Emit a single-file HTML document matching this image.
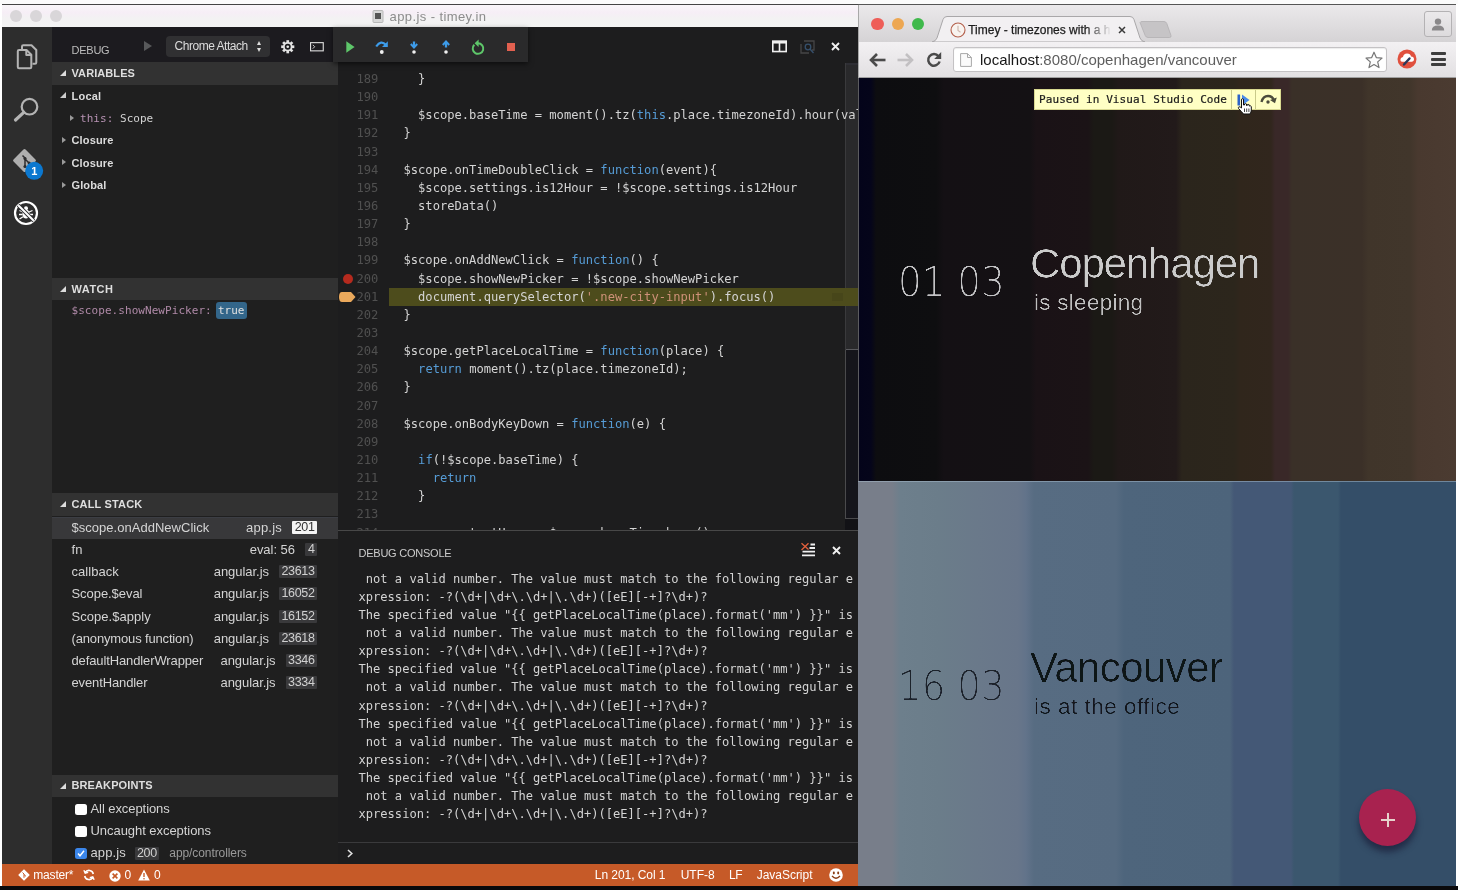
<!DOCTYPE html>
<html lang="en">
<head>
<meta charset="utf-8">
<title>app.js - timey.in</title>
<style>
*{box-sizing:border-box;margin:0;padding:0}
html,body{width:1458px;height:890px;overflow:hidden;background:#fff}
body{position:relative;font-family:"Liberation Sans",sans-serif;font-size:13px;color:#ddd}
.abs{position:absolute}
#vsc,#chr{will-change:transform}
svg{position:absolute;overflow:visible}
#bottomstrip{left:0;top:886px;width:1458px;height:4px;background:#0a0a0c}
#topstrip{left:0;top:0;width:1458px;height:4px;background:#fbfbfb}
/* ---------- VS Code ---------- */
#vsc{left:2px;top:4px;width:856px;height:882px;background:#1d1d1e;overflow:hidden}
#vtitle{left:0;top:0;width:856px;height:23px;background:linear-gradient(#f9f6f9,#f6eef6 35%,#f3f2f3 60%,#f4f4f4);color:#8c8c8c;font-size:13px;line-height:22px;border-top:1px solid #444}
.tl{top:5px;width:12px;height:12px;border-radius:50%;background:#d9d6d9}
#abar{left:0;top:23px;width:50px;height:837px;z-index:2;background:#2d2d2d}
#side{left:49px;top:23px;width:287px;height:837px;background:#1f1f1f;overflow:hidden}
#sidehead{left:0;top:0;width:287px;height:35px;background:#1c1b1f}
.sec{left:0;width:287px;height:23px;background:#323232;color:#dedede;font-weight:bold;font-size:11px;line-height:23px;padding-left:20.5px;letter-spacing:0}
.sec:before{content:"";position:absolute;left:8.5px;top:8px;border:3px solid transparent;border-right-color:#ddd;border-bottom-color:#ddd}
.row{left:0;width:287px;height:22px;line-height:22px;font-size:13px;color:#d4d4d4;white-space:nowrap}
.row .t{position:absolute;left:20.5px;top:0}
.row .f{position:absolute;right:30px;top:0}
.row .bd{position:absolute;right:21px;top:4px}
.b{font-weight:bold;font-size:11px;color:#dcdcdc}
.mono{font-family:"DejaVu Sans Mono","Liberation Mono",monospace}
.badge{display:inline-block;background:#39393b;color:#d0d0d0;font-size:12.5px;line-height:13px;height:13px;padding:0 2.5px;border-radius:1px;letter-spacing:-0.35px}
.tri{position:absolute;width:0;height:0;border-top:3.5px solid transparent;border-bottom:3.5px solid transparent;border-left:4.5px solid #9a9a9a}
#editor{left:336px;top:23px;width:520px;height:503px;background:#1d1d1e;overflow:hidden}
.ln{left:0;width:520px;height:18px;line-height:18px;font-family:"DejaVu Sans Mono","Liberation Mono",monospace;font-size:12.12px;color:#d4d4d4;white-space:pre;overflow:hidden}
.ln i{font-style:normal;position:absolute;left:18.5px;color:#505050}
.ln span.c{position:absolute;left:65.5px}
.ln b{font-weight:normal}.k{color:#569cd6}.s{color:#ce9178}
#console{left:336px;top:526px;width:520px;height:334px;background:#1d1d1e;border-top:1px solid #484848;overflow:hidden}
.cl{left:20.5px;height:18px;line-height:18px;font-family:"DejaVu Sans Mono","Liberation Mono",monospace;font-size:12.08px;color:#d4d4d4;white-space:pre}
#status{left:0;top:860px;width:856px;height:22px;background:#c65a28;color:#fff;font-size:12px;line-height:22px;white-space:nowrap}
#status span{position:absolute;top:0}
/* ---------- Chrome ---------- */
#chr{left:858px;top:4px;width:598px;height:882px;background:#dcdcdc;overflow:hidden}
#tabs{left:0;top:0;width:598px;height:38px;background:linear-gradient(#ebe9eb,#d5d3d5);border-top:1px solid #555}
#tool{left:0;top:38px;width:598px;height:36px;background:linear-gradient(#f3f1f3,#e2e0e2);border-bottom:1px solid #a0a0a0}
#page1{left:0;top:74px;width:598px;height:403px;background:linear-gradient(90deg,#04041a 0,#05051a 13px,#0d0d10 18px,#0e0e10 78px,#141014 86px,#141114 172px,#1a1216 178px,#1b1316 230px,#1b1915 236px,#1b1915 254px,#201918 260px,#221a1a 318px,#2b251c 324px,#2c261c 376px,#30261c 382px,#31261d 413px,#392828 417px,#392828 430px,#3a3028 434px,#3b3028 504px,#40352a 510px,#41362b 552px,#49392f 560px,#4b3b31 598px)}
#page2{left:0;top:477px;width:598px;height:405px;background:linear-gradient(90deg,#787e8a 0,#787e8a 34px,#6d7f8c 42px,#6b7d8a 80px,#6a798a 120px,#68768a 160px,#62738a 168px,#576c82 176px,#566b81 258px,#4e657c 266px,#4d647b 372px,#445876 376px,#445876 433px,#3b576e 436px,#3b576e 480px,#344e68 483px,#344e68 598px)}
.big{white-space:nowrap;transform-origin:0 0}
.sub{white-space:nowrap;transform-origin:0 0}
.time{white-space:nowrap;transform-origin:0 0;font-family:"DejaVu Sans Light","DejaVu Sans","Liberation Sans",sans-serif;font-weight:200}
</style>
</head>
<body>
<div class="abs" id="topstrip"></div>
<div class="abs" id="bottomstrip"></div>
<!-- ================= VS CODE ================= -->
<div class="abs" id="vsc">
  <div class="abs" id="vtitle">
    <div class="abs tl" style="left:8px"></div><div class="abs tl" style="left:27.500px"></div><div class="abs tl" style="left:47.500px"></div>
    <svg style="left:370px;top:5px" width="12" height="13" viewBox="0 0 12 13"><rect x="1" y="0.5" width="10" height="12" rx="1" fill="#d8d8d8" stroke="#b8b8b8"/><rect x="3" y="3" width="6" height="6" fill="#555"/></svg>
    <span class="abs" id="t_title" style="left:387.5px;top:1px;letter-spacing:0.407px">app.js - timey.in</span>
  </div>

  <!-- activity bar -->
  <div class="abs" id="abar">
    <!-- files -->
    <svg style="left:14px;top:17px" width="22" height="26" viewBox="0 0 22 26" fill="none" stroke="#b4b4b4" stroke-width="2" stroke-linejoin="round">
      <path d="M6 5.500V2.500Q6 1.200 7.300 1.200H15.500L20.300 6V18.500Q20.300 19.800 19 19.800H16.500"/>
      <path d="M1.800 7.300Q1.800 6 3.100 6H10.500L15.300 10.800V23Q15.300 24.300 14 24.300H3.100Q1.800 24.300 1.800 23Z"/>
      <path d="M10.300 6.300V11H15"/>
    </svg>
    <!-- search -->
    <svg style="left:11px;top:68px" width="28" height="28" viewBox="0 0 28 28" fill="none" stroke="#b4b4b4">
      <circle cx="16.500" cy="11.700" r="7.800" stroke-width="2.200"/>
      <path d="M10.800 17.300L2.500 25" stroke-width="3.200" stroke-linecap="round"/>
    </svg>
    <!-- git -->
    <svg style="left:10px;top:120px" width="34" height="34" viewBox="0 0 34 34">
      <rect x="4" y="5" width="17" height="17" rx="1.500" transform="rotate(45 12.500 13.500)" fill="#aeaeae"/>
      <path d="M10.500 8.500L13 11V19.500M13 12L17 16" stroke="#2c2c2e" stroke-width="1.500" fill="none"/>
      <circle cx="13" cy="11.500" r="1.600" fill="#2c2c2e"/><circle cx="13" cy="19.500" r="1.600" fill="#2c2c2e"/><circle cx="17.200" cy="16" r="1.600" fill="#2c2c2e"/>
      <circle cx="22.200" cy="23.800" r="9" fill="#0b78d0"/>
      <text x="22.200" y="27.800" font-family="Liberation Sans, sans-serif" font-size="11" font-weight="bold" fill="#fff" text-anchor="middle">1</text>
    </svg>
    <!-- debug -->
    <svg style="left:11px;top:173px" width="26" height="26" viewBox="0 0 26 26" fill="none" stroke="#fff">
      <circle cx="13" cy="13" r="11" stroke-width="2.200"/>
      <ellipse cx="13" cy="14" rx="3.600" ry="4.600" fill="#fff" stroke="none"/>
      <circle cx="13" cy="8.300" r="2" fill="#fff" stroke="none"/>
      <path d="M6.500 10.500L10 12M6 14.500H9.500M6.500 19L10 16.800M19.500 10.500L16 12M20 14.500H16.500M19.500 19L16 16.800" stroke-width="1.300"/>
      <path d="M5.200 5.200L20.800 20.800" stroke="#2c2c2e" stroke-width="4"/>
      <path d="M5.200 5.200L20.800 20.800" stroke-width="2"/>
    </svg>
  </div>
  <!-- sidebar -->
  <div class="abs" id="side">
    <div class="abs" id="sidehead">
      <span class="abs" id="t_debug" style="left:20.5px;top:11px;font-size:11px;line-height:24px;color:#bdbdbd;letter-spacing:-0.245px">DEBUG</span>
      <div class="abs" style="left:93px;top:13.5px;width:0;height:0;border-top:5.5px solid transparent;border-bottom:5.5px solid transparent;border-left:8px solid #58595b"></div>
      <div class="abs" style="left:115px;top:9px;width:104px;height:20.5px;background:#303032;border-radius:4px"></div>
      <span class="abs" id="t_chrome" style="left:123.5px;top:8px;font-size:12px;line-height:22px;color:#dcdcdc;letter-spacing:-0.468px">Chrome Attach</span>
      <div class="abs" style="left:206px;top:13.5px;border:2.500px solid transparent;border-bottom:4px solid #ddd;border-top:0"></div>
      <div class="abs" style="left:206px;top:20.5px;border:2.500px solid transparent;border-top:4px solid #ddd;border-bottom:0"></div>
      <!-- gear -->
      <svg style="left:230px;top:13px" width="13.500" height="13.500" viewBox="-7.500 -7.500 15 15">
        <g fill="#e4e4e4">
          <rect x="-1.500" y="-7.300" width="3" height="14.600"/>
          <rect x="-1.500" y="-7.300" width="3" height="14.600" transform="rotate(45)"/>
          <rect x="-1.500" y="-7.300" width="3" height="14.600" transform="rotate(90)"/>
          <rect x="-1.500" y="-7.300" width="3" height="14.600" transform="rotate(135)"/>
          <circle r="5.300"/>
        </g>
        <circle r="3.300" fill="#19191b"/><circle r="1.500" fill="#e4e4e4"/>
      </svg>
      <!-- terminal -->
      <svg style="left:258.500px;top:15px" width="14" height="9.500" viewBox="0 0 15 10" fill="none" stroke="#dcdcdc">
        <rect x="0.600" y="0.600" width="13.600" height="8.800" stroke-width="1.200"/>
        <path d="M3 3L5 5L3 7" stroke-width="1"/>
      </svg>
    </div>

    <div class="abs sec" style="top:35px"><span id="t_variables" style="letter-spacing:0.083px">VARIABLES</span></div>
    <div class="abs row" style="top:57.500px"><div class="abs" style="left:8.500px;top:7.500px;border:3px solid transparent;border-right-color:#ccc;border-bottom-color:#ccc"></div><span class="t b" id="t_local" style="letter-spacing:0.233px">Local</span></div>
    <div class="abs row" style="top:80.5px"><div class="tri" style="left:19px;top:7.500px"></div><span class="t mono" id="t_this" style="left:29px;font-size:11px;color:#d4d4d4;letter-spacing:0.039px"><span style="color:#b893b4">this:</span> Scope</span></div>
    <div class="abs row" style="top:102.200px"><div class="tri" style="left:10.500px;top:7.500px"></div><span class="t b" id="t_closure1" style="letter-spacing:0.149px">Closure</span></div>
    <div class="abs row" style="top:124.8px"><div class="tri" style="left:10.500px;top:7.500px"></div><span class="t b" id="t_closure2" style="letter-spacing:0.149px">Closure</span></div>
    <div class="abs row" style="top:147.2px"><div class="tri" style="left:10.500px;top:7.500px"></div><span class="t b" id="t_global" style="letter-spacing:0.111px">Global</span></div>

    <div class="abs sec" style="top:251px;height:22px;line-height:22px"><span id="t_watch" style="letter-spacing:0.497px">WATCH</span></div>
    <div class="abs row" style="top:272.7px"><span class="t mono" id="t_watchexpr" style="font-size:11px;color:#b08aa8;letter-spacing:0.058px">$scope.showNewPicker:</span>
      <span class="abs mono" style="left:165px;top:2.5px;height:17px;line-height:17px;width:30.5px;text-align:center;background:#33668a;border-radius:3px;font-size:11px;color:#e0e0e0">true</span></div>

    <div class="abs sec" style="top:466px"><span id="t_callstack" style="letter-spacing:0.164px">CALL STACK</span></div>
    <div class="abs row" style="top:489.500px;background:#38383a;border-top:1px solid #3c3e44"><span class="t" id="t_cs1" style="top:-1px;letter-spacing:0.025px">$scope.onAddNewClick</span><span class="f" id="t_cf1" style="top:-1px;right:56px;letter-spacing:0.216px">app.js</span><span class="bd badge" style="background:#f4f4f4;color:#333;top:3.5px">201</span></div>
    <div class="abs row" style="top:512px"><span class="t" id="t_cs2" style="letter-spacing:0.226px">fn</span><span class="f" id="t_cf2" style="right:43px;letter-spacing:-0.031px">eval: 56</span><span class="bd badge">4</span></div>
    <div class="abs row" style="top:534.200px"><span class="t" id="t_cs3" style="letter-spacing:0.041px">callback</span><span class="f" id="t_cf3" style="right:69px;letter-spacing:-0.036px">angular.js</span><span class="bd badge">23613</span></div>
    <div class="abs row" style="top:556.400px"><span class="t" id="t_cs4" style="letter-spacing:-0.061px">Scope.$eval</span><span class="f" id="t_cf4" style="right:69px;letter-spacing:-0.036px">angular.js</span><span class="bd badge">16052</span></div>
    <div class="abs row" style="top:578.600px"><span class="t" id="t_cs5" style="letter-spacing:0.035px">Scope.$apply</span><span class="f" id="t_cf5" style="right:69px;letter-spacing:-0.036px">angular.js</span><span class="bd badge">16152</span></div>
    <div class="abs row" style="top:600.800px"><span class="t" id="t_cs6" style="letter-spacing:-0.156px">(anonymous function)</span><span class="f" id="t_cf6" style="right:69px;letter-spacing:-0.036px">angular.js</span><span class="bd badge">23618</span></div>
    <div class="abs row" style="top:623px"><span class="t" id="t_cs7" style="letter-spacing:-0.118px">defaultHandlerWrapper</span><span class="f" id="t_cf7" style="right:62.500px;letter-spacing:-0.066px">angular.js</span><span class="bd badge">3346</span></div>
    <div class="abs row" style="top:645.200px"><span class="t" id="t_cs8" style="letter-spacing:-0.12px">eventHandler</span><span class="f" id="t_cf8" style="right:62.500px;letter-spacing:-0.066px">angular.js</span><span class="bd badge">3334</span></div>

    <div class="abs sec" style="top:748px;height:22px;line-height:21px"><span id="t_breakpoints" style="letter-spacing:0.103px">BREAKPOINTS</span></div>
    <div class="abs row" style="top:771px"><div class="abs" style="left:24px;top:5.5px;width:11.500px;height:11.500px;background:#fff;border-radius:2.500px"></div><span class="t" id="t_bp1" style="left:39.500px;letter-spacing:-0.072px">All exceptions</span></div>
    <div class="abs row" style="top:793px"><div class="abs" style="left:24px;top:5.5px;width:11.500px;height:11.500px;background:#fff;border-radius:2.500px"></div><span class="t" id="t_bp2" style="left:39.500px;letter-spacing:-0.048px">Uncaught exceptions</span></div>
    <div class="abs row" style="top:815px"><div class="abs" style="left:24px;top:5.5px;width:11.500px;height:11.500px;background:#3b86ea;border-radius:2.500px"></div>
      <svg style="left:26px;top:8px" width="8" height="7" viewBox="0 0 8 7" fill="none" stroke="#fff" stroke-width="1.400"><path d="M1 3.500L3 5.800L7 0.800"/></svg>
      <span class="t" id="t_bp3" style="left:39.500px;letter-spacing:0.102px">app.js</span><span class="abs badge" style="left:83.500px;top:4.5px">200</span><span class="abs" id="t_bp3p" style="left:118.300px;top:0;font-size:12px;color:#9a9a9a;letter-spacing:-0.087px">app/controllers</span></div>
  </div>
  <!-- editor -->
  <div class="abs" id="editor">
    <div class="abs" style="left:507px;top:35px;width:13px;height:288px;background:#29292b;border-left:1px solid #3a3a3c"></div>
    <div class="abs" style="left:507px;top:323px;width:13px;height:169px;background:#15151b;border-left:1px solid #4a4a4c;border-bottom:1px solid #4a4a4c"></div>
    <div class="abs" style="left:507px;top:492px;width:13px;height:11px;background:#121216"></div>
    <div class="abs" style="left:51px;top:260.5px;width:469px;height:18.4px;background:#4d4c1c"></div>
    <div class="abs" style="left:494px;top:265.5px;width:11px;height:8px;background:#47461a"></div>
    <div class="abs" style="left:508px;top:322px;width:12px;height:1px;background:#5a5a5e"></div>
    <div class="abs" style="left:508px;top:35px;width:12px;height:3px;background:#2e2e34"></div>
    <div class="abs ln" style="top:43.00px"><i>189</i><span class="c">  }</span></div>
    <div class="abs ln" style="top:61.14px"><i>190</i><span class="c"></span></div>
    <div class="abs ln" style="top:79.28px"><i>191</i><span class="c">  $scope.baseTime = moment().tz(<b class="k">this</b>.place.timezoneId).hour(value)</span></div>
    <div class="abs ln" style="top:97.42px"><i>192</i><span class="c">}</span></div>
    <div class="abs ln" style="top:115.56px"><i>193</i><span class="c"></span></div>
    <div class="abs ln" style="top:133.70px"><i>194</i><span class="c">$scope.onTimeDoubleClick = <b class="k">function</b>(event){</span></div>
    <div class="abs ln" style="top:151.84px"><i>195</i><span class="c">  $scope.settings.is12Hour = !$scope.settings.is12Hour</span></div>
    <div class="abs ln" style="top:169.98px"><i>196</i><span class="c">  storeData()</span></div>
    <div class="abs ln" style="top:188.12px"><i>197</i><span class="c">}</span></div>
    <div class="abs ln" style="top:206.26px"><i>198</i><span class="c"></span></div>
    <div class="abs ln" style="top:224.40px"><i>199</i><span class="c">$scope.onAddNewClick = <b class="k">function</b>() {</span></div>
    <div class="abs ln" style="top:242.54px"><i>200</i><span class="c">  $scope.showNewPicker = !$scope.showNewPicker</span></div>
    <div class="abs ln" style="top:260.68px"><i>201</i><span class="c">  document.querySelector(<b class="s">'.new-city-input'</b>).focus()</span></div>
    <div class="abs ln" style="top:278.82px"><i>202</i><span class="c">}</span></div>
    <div class="abs ln" style="top:296.96px"><i>203</i><span class="c"></span></div>
    <div class="abs ln" style="top:315.10px"><i>204</i><span class="c">$scope.getPlaceLocalTime = <b class="k">function</b>(place) {</span></div>
    <div class="abs ln" style="top:333.24px"><i>205</i><span class="c">  <b class="k">return</b> moment().tz(place.timezoneId);</span></div>
    <div class="abs ln" style="top:351.38px"><i>206</i><span class="c">}</span></div>
    <div class="abs ln" style="top:369.52px"><i>207</i><span class="c"></span></div>
    <div class="abs ln" style="top:387.66px"><i>208</i><span class="c">$scope.onBodyKeyDown = <b class="k">function</b>(e) {</span></div>
    <div class="abs ln" style="top:405.80px"><i>209</i><span class="c"></span></div>
    <div class="abs ln" style="top:423.94px"><i>210</i><span class="c">  <b class="k">if</b>(!$scope.baseTime) {</span></div>
    <div class="abs ln" style="top:442.08px"><i>211</i><span class="c">    <b class="k">return</b></span></div>
    <div class="abs ln" style="top:460.22px"><i>212</i><span class="c">  }</span></div>
    <div class="abs ln" style="top:478.36px"><i>213</i><span class="c"></span></div>
    <div class="abs ln" style="top:496.50px"><i>214</i><span class="c">    <b class="k">var</b> startHour = $scope.baseTime.hour()</span></div>
    <div class="abs" style="left:4.5px;top:246.5px;width:10px;height:10px;border-radius:50%;background:#b52a1e"></div>
    <svg style="left:1px;top:264.7px" width="17" height="10" viewBox="0 0 17 10"><path d="M3 0H12L16.500 5L12 10H3Q0 10 0 5Q0 0 3 0Z" fill="#eaa95c"/></svg>
    <div class="abs" style="left:0;top:0;width:520px;height:36px;background:#1d1d1e"></div>
  </div>
  <!-- debug console -->
  <div class="abs" id="console">
    <div class="abs cl" style="top:20.35px">The specified value "{{ getPlaceLocalTime(place).format('mm') }}" is</div>
    <div class="abs cl" style="top:38.50px"> not a valid number. The value must match to the following regular e</div>
    <div class="abs cl" style="top:56.65px">xpression: -?(\d+|\d+\.\d+|\.\d+)([eE][-+]?\d+)?</div>
    <div class="abs cl" style="top:74.80px">The specified value "{{ getPlaceLocalTime(place).format('mm') }}" is</div>
    <div class="abs cl" style="top:92.95px"> not a valid number. The value must match to the following regular e</div>
    <div class="abs cl" style="top:111.10px">xpression: -?(\d+|\d+\.\d+|\.\d+)([eE][-+]?\d+)?</div>
    <div class="abs cl" style="top:129.25px">The specified value "{{ getPlaceLocalTime(place).format('mm') }}" is</div>
    <div class="abs cl" style="top:147.40px"> not a valid number. The value must match to the following regular e</div>
    <div class="abs cl" style="top:165.55px">xpression: -?(\d+|\d+\.\d+|\.\d+)([eE][-+]?\d+)?</div>
    <div class="abs cl" style="top:183.70px">The specified value "{{ getPlaceLocalTime(place).format('mm') }}" is</div>
    <div class="abs cl" style="top:201.85px"> not a valid number. The value must match to the following regular e</div>
    <div class="abs cl" style="top:220.00px">xpression: -?(\d+|\d+\.\d+|\.\d+)([eE][-+]?\d+)?</div>
    <div class="abs cl" style="top:238.15px">The specified value "{{ getPlaceLocalTime(place).format('mm') }}" is</div>
    <div class="abs cl" style="top:256.30px"> not a valid number. The value must match to the following regular e</div>
    <div class="abs cl" style="top:274.45px">xpression: -?(\d+|\d+\.\d+|\.\d+)([eE][-+]?\d+)?</div>
    <div class="abs" style="left:0;top:0;width:520px;height:37px;background:#1d1d1e"></div>
    <span class="abs" id="t_dbgconsole" style="left:20.5px;top:11px;font-size:11px;line-height:22px;color:#cccccc;letter-spacing:-0.236px">DEBUG CONSOLE</span>
    <svg style="left:463px;top:12px" width="15" height="14" viewBox="0 0 15 14" fill="none">
      <path d="M9.500 1.500H14M8.500 5H14M1.500 8.700H14M1 12.300H14" stroke="#f0f0f0" stroke-width="1.800"/>
      <path d="M0.500 0.300L7.500 6.500M7.500 0.300L0.500 7" stroke="#e2603c" stroke-width="1.300"/>
    </svg>
    <svg style="left:493.5px;top:15px" width="9" height="9" viewBox="0 0 9 9"><path d="M1 1L8 8M8 1L1 8" stroke="#f0f0f0" stroke-width="1.900"/></svg>
    <div class="abs" style="left:0;top:311px;width:520px;height:1px;background:#3a3a3c"></div>
    <div class="abs" style="left:0;top:312px;width:520px;height:22px;background:#1d1d1e"></div>
    <svg style="left:8.5px;top:318px" width="6" height="9" viewBox="0 0 6 9"><path d="M1 1L4.800 4.500L1 8" stroke="#e0e0e0" stroke-width="1.600" fill="none"/></svg>
  </div>
  <!-- editor actions -->
  <svg style="left:769.5px;top:36.2px" width="15" height="12.700" viewBox="0 0 15 12" fill="none" stroke="#f0f0f0"><rect x="0.800" y="0.800" width="13.400" height="10.400" stroke-width="1.600"/><path d="M0.800 2H14.200" stroke-width="2.400"/><path d="M7.500 1V11" stroke-width="1.600"/></svg>
  <svg style="left:798px;top:36px" width="16" height="15" viewBox="0 0 16 15" fill="none" stroke="#454547" stroke-width="1.300"><path d="M1 4V13H9"/><path d="M4 1H14V10H12"/><circle cx="8" cy="7" r="2.800" stroke="#36506c"/><path d="M10 9L13.500 13" stroke="#36506c"/></svg>
  <svg style="left:829px;top:37.5px" width="9" height="9" viewBox="0 0 9 9"><path d="M1 1L8 8M8 1L1 8" stroke="#f0f0f0" stroke-width="1.900"/></svg>

  <!-- debug toolbar -->
  <div class="abs" style="left:331px;top:23px;width:194.500px;height:35px;background:#2a2a2b;box-shadow:0 2px 5px rgba(0,0,0,.55)">
    <svg style="left:12.500px;top:13.700px" width="9" height="12" viewBox="0 0 9 12"><path d="M0.300 0.300L8.600 6L0.300 11.700Z" fill="#5ec76a"/></svg>
    <svg style="left:42px;top:12px" width="14" height="16" viewBox="0 0 14 16" fill="none"><path d="M1.200 7.500Q6 0.500 11 6" stroke="#3d9cea" stroke-width="2.200"/><path d="M12.800 2.200V8H7Z" fill="#3d9cea"/><circle cx="6.800" cy="13" r="1.900" fill="#f0f0f0"/></svg>
    <svg style="left:76.500px;top:12px" width="8" height="16" viewBox="0 0 8 16" fill="none"><path d="M4 2.500V7.500" stroke="#3d9cea" stroke-width="2.300"/><path d="M0.800 5L4 8.500L7.200 5" stroke="#3d9cea" stroke-width="1.900"/><circle cx="4" cy="13" r="1.800" fill="#f0f0f0"/></svg>
    <svg style="left:109px;top:12px" width="8" height="16" viewBox="0 0 8 16" fill="none"><path d="M4 3V8.500" stroke="#3d9cea" stroke-width="2.300"/><path d="M0.800 6L4 2.500L7.200 6" stroke="#3d9cea" stroke-width="1.900"/><circle cx="4" cy="13" r="1.800" fill="#f0f0f0"/></svg>
    <svg style="left:137px;top:11.500px" width="16" height="17" viewBox="0 0 16 17" fill="none"><path d="M4.300 5.700A5.300 5.300 0 1 0 8 4.200" stroke="#5ec76a" stroke-width="2"/><path d="M8.600 0.500L4.600 4.300L8.600 8Z" fill="#5ec76a"/></svg>
    <div class="abs" style="left:173.500px;top:15.900px;width:8.300px;height:8.300px;background:#e2604f"></div>
  </div>

  <!-- status bar -->
  <div class="abs" id="status">
    <svg style="left:15.500px;top:5px" width="12" height="12" viewBox="0 0 12 12"><rect x="1.800" y="1.800" width="8.400" height="8.400" rx="0.800" transform="rotate(45 6 6)" fill="#fff"/><path d="M4.500 3.500L6 5V8.800M6 5.500L8 7.400" stroke="#c65a28" stroke-width="1" fill="none"/></svg>
    <span id="t_master" style="left:31.300px;letter-spacing:-0.192px">master*</span>
    <svg style="left:80.500px;top:5px" width="12" height="12" viewBox="0 0 12 12" fill="none" stroke="#fff" stroke-width="1.600"><path d="M10.300 5A4.400 4.400 0 0 0 2.200 3.600"/><path d="M1.700 7A4.400 4.400 0 0 0 9.800 8.400"/><path d="M0.800 1.200L2.200 4.200L5.200 3.400" stroke-width="1.200" fill="#fff"/><path d="M11.200 10.800L9.800 7.800L6.800 8.600" stroke-width="1.200" fill="#fff"/></svg>
    <svg style="left:106.500px;top:5.500px" width="12" height="12" viewBox="0 0 12 12"><circle cx="6" cy="6" r="5.700" fill="#fff"/><path d="M3.600 3.600L8.400 8.400M8.400 3.600L3.600 8.400" stroke="#c65a28" stroke-width="1.600"/></svg>
    <span style="left:122.500px">0</span>
    <svg style="left:136px;top:5px" width="12" height="12" viewBox="0 0 12 12"><path d="M6 0.500L11.800 11.500H0.200Z" fill="#fff"/><path d="M6 4V8" stroke="#c65a28" stroke-width="1.400"/><circle cx="6" cy="9.800" r="0.800" fill="#c65a28"/></svg>
    <span style="left:152px">0</span>
    <span id="t_lncol" style="left:592.800px;letter-spacing:-0.061px">Ln 201, Col 1</span>
    <span id="t_utf" style="left:678.700px">UTF-8</span>
    <span id="t_lf" style="left:727px;letter-spacing:-0.457px">LF</span>
    <span id="t_js" style="left:754.700px;letter-spacing:-0.023px">JavaScript</span>
    <svg style="left:826.500px;top:4px" width="14" height="14" viewBox="0 0 14 14"><circle cx="7" cy="7" r="6.800" fill="#fff"/><ellipse cx="4.800" cy="5" rx="1" ry="1.400" fill="#8a3c14"/><ellipse cx="9.200" cy="5" rx="1" ry="1.400" fill="#8a3c14"/><path d="M3 8Q7 12.500 11 8" stroke="#8a3c14" stroke-width="1.300" fill="none"/></svg>
  </div>
</div>
<!-- ================= CHROME ================= -->
<svg width="0" height="0" style="left:0;top:0"><defs>
<filter id="thin" x="-5%" y="-5%" width="110%" height="110%"><feGaussianBlur stdDeviation="0.7"/><feComponentTransfer><feFuncA type="linear" slope="3" intercept="-1.9"/></feComponentTransfer></filter>
<filter id="thin2" x="-5%" y="-5%" width="110%" height="110%"><feGaussianBlur stdDeviation="0.5"/><feComponentTransfer><feFuncA type="linear" slope="2.5" intercept="-1.2"/></feComponentTransfer></filter>
</defs></svg>
<div class="abs" id="chr">
  <div class="abs" id="tabs">
    <div class="abs" style="left:13px;top:12.500px;width:12.500px;height:12.500px;border-radius:50%;background:#ee5e58"></div>
    <div class="abs" style="left:33.500px;top:12.500px;width:12.500px;height:12.500px;border-radius:50%;background:#eda752"></div>
    <div class="abs" style="left:53.700px;top:12.500px;width:12.500px;height:12.500px;border-radius:50%;background:#3fb94b"></div>
    <!-- tab shape -->
    <svg style="left:74px;top:10px" width="214" height="27" viewBox="0 0 214 27">
      <path d="M0 27Q3.500 26.500 5 23L11 4.500Q12 1.500 15 1.500H198Q201 1.500 202 4.500L208 23Q209.500 26.500 213 27Z" fill="#f2f0f2" stroke="#a9a7a9" stroke-width="1"/>
    </svg>
    <!-- favicon -->
    <svg style="left:91.500px;top:16.500px" width="16" height="16" viewBox="0 0 16 16" fill="none"><circle cx="8" cy="8" r="7" fill="#f8f3ef" stroke="#b4604c" stroke-width="1.100"/><path d="M8 3.800V8.500L10.500 10.200" stroke="#cdb4aa" stroke-width="1.100"/></svg>
    <span class="abs" id="t_tab" style="left:110.200px;top:15.500px;font-size:12px;line-height:18px;color:#1c1c1c;-webkit-text-stroke:0.25px #1c1c1c;white-space:nowrap;width:147px;overflow:hidden">Timey - timezones with a hint of</span>
    <div class="abs" style="left:228px;top:15px;width:30px;height:18px;background:linear-gradient(90deg,rgba(242,240,242,0),#f2f0f2 85%)"></div>
    <svg style="left:260px;top:20.500px" width="8" height="8" viewBox="0 0 8 8"><path d="M1 1L7 7M7 1L1 7" stroke="#3a3a3a" stroke-width="1.500"/></svg>
    <!-- new tab -->
    <svg style="left:281px;top:16px" width="33" height="17" viewBox="0 0 33 17"><path d="M1 1.500Q1.500 0.500 3 0.500H25Q27 0.500 27.800 2.500L32 14.500Q32.500 16.500 30.500 16.500H9Q7 16.500 6.200 14.500Z" fill="#c6c4c6" stroke="#b2b0b2" stroke-width="0.800"/></svg>
    <!-- user button -->
    <div class="abs" style="left:566px;top:6px;width:27.500px;height:26px;border:1px solid #b4b2b4;border-radius:3px;background:linear-gradient(#ebe9eb,#dddbdd)"></div>
    <svg style="left:573px;top:12.500px" width="14" height="13" viewBox="0 0 14 13"><circle cx="7" cy="3.600" r="3.200" fill="#8a888a"/><path d="M0.800 12.500Q0.800 7.500 7 7.500Q13.200 7.500 13.200 12.500Z" fill="#8a888a"/></svg>
  </div>
  <div class="abs" id="tool">
    <!-- back -->
    <svg style="left:11px;top:10.500px" width="17" height="14" viewBox="0 0 17 14" fill="none" stroke="#4a4a4a" stroke-width="2.600"><path d="M2 7H16.500"/><path d="M8 1L2 7L8 13"/></svg>
    <svg style="left:38.500px;top:10.500px" width="17" height="14" viewBox="0 0 17 14" fill="none" stroke="#c2c0c2" stroke-width="2.600"><path d="M0.500 7H15"/><path d="M9 1L15 7L9 13"/></svg>
    <!-- reload -->
    <svg style="left:68px;top:9px" width="16" height="17" viewBox="0 0 16 17" fill="none"><path d="M12.500 5.200A5.800 5.800 0 1 0 13.600 10.500" stroke="#4a4a4a" stroke-width="2.500"/><path d="M15.200 1V8H8.200Z" fill="#4a4a4a"/></svg>
    <!-- omnibox -->
    <div class="abs" style="left:95px;top:5px;width:434px;height:25px;background:#fff;border:1px solid #c4c2c4;border-radius:3px;box-shadow:inset 0 1px 1px rgba(0,0,0,.08)"></div>
    <svg style="left:102px;top:11px" width="12" height="14" viewBox="0 0 12 14"><path d="M0.600 0.600H7.500L11.400 4.500V13.400H0.600Z" fill="#fbfbfb" stroke="#a8a8a8" stroke-width="1"/><path d="M7.500 0.600V4.500H11.400" fill="none" stroke="#a8a8a8" stroke-width="1"/></svg>
    <span class="abs" id="t_url" style="left:122px;top:7px;font-size:15px;line-height:22px;color:#161616;white-space:nowrap">localhost<span style="color:#5e5e5e">:8080/copenhagen/vancouver</span></span>
    <!-- star -->
    <svg style="left:507px;top:8.500px" width="18" height="18" viewBox="0 0 18 18"><path d="M9 1.200L11.300 6.600L17 7.100L12.700 10.900L14 16.600L9 13.600L4 16.600L5.300 10.900L1 7.100L6.700 6.600Z" fill="#fdfdfd" stroke="#767676" stroke-width="1.200" stroke-linejoin="round"/></svg>
    <!-- extension -->
    <svg style="left:538.500px;top:6.500px" width="20" height="20" viewBox="0 0 20 20"><circle cx="10" cy="10" r="9.500" fill="#e0503e"/><path d="M3.500 11.500Q3 8.500 6 8Q6.500 4.500 10 4.500Q13.500 4.500 14 7.500Q17 7.500 17 10.500Q17 12.500 15 12.800H5Q3.500 12.500 3.500 11.500Z" fill="#fff"/><path d="M7 15.500L12.500 9.500" stroke="#2a3a5c" stroke-width="2.400" stroke-linecap="round"/></svg>
    <!-- menu -->
    <div class="abs" style="left:573px;top:10px;width:15px;height:3px;background:#3e3e3e;border-radius:1px"></div>
    <div class="abs" style="left:573px;top:15.500px;width:15px;height:3px;background:#3e3e3e;border-radius:1px"></div>
    <div class="abs" style="left:573px;top:21px;width:15px;height:3px;background:#3e3e3e;border-radius:1px"></div>
  </div>
  <div class="abs" id="page1">
    <!-- paused overlay -->
    <div class="abs" style="left:176px;top:10.5px;width:247px;height:21.500px;background:#ffffc4;border:1px solid #d8d890"></div>
    <span class="abs mono" id="t_paused" style="left:181px;top:13px;font-size:11px;line-height:18px;color:#1a1a1a;-webkit-text-stroke:0.2px #1a1a1a;white-space:nowrap;letter-spacing:0.091px">Paused in Visual Studio Code</span>
    <div class="abs" style="left:372.500px;top:11.5px;width:1px;height:19.500px;background:#c9c98a"></div>
    <div class="abs" style="left:397px;top:11.5px;width:1px;height:19.500px;background:#c9c98a"></div>
    <svg style="left:379px;top:15.5px" width="13" height="12" viewBox="0 0 13 12"><rect x="0.500" y="0.500" width="2.600" height="11" fill="#2c63c8"/><path d="M5 0.500L12.500 6L5 11.500Z" fill="#4a8ae8"/></svg>
    <svg style="left:402px;top:16px" width="17" height="10" viewBox="0 0 17 10" fill="none"><path d="M1.500 8Q3 2 8 2Q12.500 2 14 6.500" stroke="#4c4c3c" stroke-width="2.300"/><path d="M16.800 3.500L15 9.200L10 6Z" fill="#4c4c3c"/><circle cx="8" cy="8" r="1.700" fill="#4c4c3c"/></svg>
    <!-- cursor (hand) -->
    <svg style="left:379px;top:20px" width="15" height="17" viewBox="0 0 15 17"><path d="M4.500 1.200Q5.500 0.300 6.500 1.200V7H7.500V6Q8.500 5.200 9.500 6V7.500H10.200V6.800Q11.200 6 12.200 6.800V8H12.700Q13.800 7.500 14.300 8.500V12Q14.300 14 13 16H6.500Q4.500 13.500 1.500 10.500Q0.800 9.300 2 8.800Q3 8.500 4.500 10Z" fill="#fff" stroke="#111" stroke-width="1"/><path d="M7.500 10.500V14M9.700 10.500V14M11.900 10.500V14" stroke="#111" stroke-width="0.800"/></svg>

    <span class="abs time" id="t_time1" style="left:40px;top:179px;transform:scaleX(0.897);filter:url(#thin2);font-size:41.500px;line-height:50px;color:#c2c2c4">01 03</span>
    <span class="abs big" id="t_city1" style="left:172px;top:160.5px;filter:url(#thin);font-size:42px;line-height:50px;color:#cbcbcb;letter-spacing:-1.147px">Copenhagen</span>
    <span class="abs sub" id="t_sub1" style="left:176px;top:211px;filter:url(#thin2);font-size:22.500px;line-height:28px;color:#c0c0c0;letter-spacing:0.27px">is sleeping</span>
  </div>
  <div class="abs" id="page2">
    <div class="abs" style="left:0;top:0;width:598px;height:1px;background:rgba(170,190,205,.5)"></div>
    <span class="abs time" id="t_time2" style="left:40px;top:180px;transform:scaleX(0.897);filter:url(#thin2);font-size:41.500px;line-height:50px;color:#1c222c">16 03</span>
    <span class="abs big" id="t_city2" style="left:172px;top:161.500px;filter:url(#thin);font-size:42px;line-height:50px;color:#0e1218;letter-spacing:-0.588px">Vancouver</span>
    <span class="abs sub" id="t_sub2" style="left:176px;top:212px;filter:url(#thin2);font-size:22.500px;line-height:28px;color:#12161c;letter-spacing:0.492px">is at the office</span>
    <!-- FAB -->
    <div class="abs" style="left:501px;top:308px;width:57px;height:57px;border-radius:50%;background:#a8224f;box-shadow:0 6px 6px rgba(22,22,48,.6)"></div>
    <div class="abs" style="left:522.500px;top:337.500px;width:14px;height:2px;background:#e6d2cc"></div>
    <div class="abs" style="left:528.500px;top:331.500px;width:2px;height:14px;background:#e6d2cc"></div>
  </div>
  <div class="abs" style="left:0;top:1px;width:1px;height:73px;background:#a8a8a8"></div><div class="abs" style="left:0;top:74px;width:1px;height:403px;background:#5c5c60"></div>
</div>
</body>
</html>
